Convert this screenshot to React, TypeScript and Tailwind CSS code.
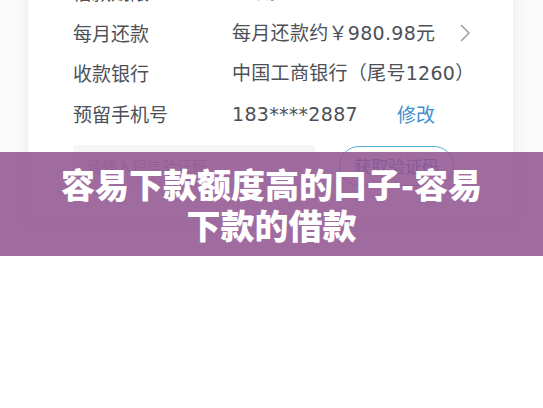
const rowCls = "flex items-center h-[40.5px] text-[19px] text-[#4d5057]";
const valCls = "font-['DejaVu_Sans','Noto_Sans_CJK_SC',sans-serif] tracking-[0.3px]";

function Row({ label, children }: { label: string; children: React.ReactNode }) {
  return (
    <div className={rowCls}>
      <div className="w-[159px] shrink-0">{label}</div>
      {children}
    </div>
  );
}

export default function App() {
  return (
    <div className="w-[543px] h-[408px] bg-white overflow-hidden font-['Noto_Sans_CJK_SC','Noto_Sans',sans-serif]">
      <div className="relative h-[256px] bg-[#fafafa] pl-[28px] overflow-hidden">
        <div className="-mt-[28px] w-[485px] bg-white rounded-b-md shadow-[0_0_14px_rgba(0,0,0,0.07)] pl-[45px] pb-[33px]">
          <Row label="借款期限">
            <div className={valCls}>12期</div>
          </Row>
          <Row label="每月还款">
            <div className={`w-[228px] ${valCls}`}>每月还款约￥980.98元</div>
            <svg width="11" height="18" viewBox="0 0 11 18" fill="none">
              <path d="M1.5 1.5 L9 9 L1.5 16.5" stroke="#a0a0a0" strokeWidth="1.6" strokeLinecap="round" strokeLinejoin="round" />
            </svg>
          </Row>
          <Row label="收款银行">
            <div className={valCls}>中国工商银行（尾号1260）</div>
          </Row>
          <Row label="预留手机号">
            <div className={`w-[165px] ${valCls}`}>183****2887</div>
            <div className="text-[#3d8fcf]">修改</div>
          </Row>
          <div className="flex items-center mt-[11px]">
            <div className="w-[242px] h-[42px] bg-[#f5f5f5] rounded-[4px] pl-[14px] flex items-center text-[15px] text-[#b0b0b0]">
              请输入短信验证码
            </div>
            <div className="ml-[24px] w-[115px] h-[40px] rounded-full border border-[#5aaedc] flex items-center justify-center text-[17px] text-[#3d8fcf]">
              获取验证码
            </div>
          </div>
        </div>
        <div className="absolute left-0 right-0 top-[152px] h-[104px] bg-[rgba(143,82,143,0.85)] flex items-center justify-center px-[56px] text-center text-white text-[34px] font-black leading-[41px]">
          容易下款额度高的口子-容易下款的借款
        </div>
      </div>
    </div>
  );
}
